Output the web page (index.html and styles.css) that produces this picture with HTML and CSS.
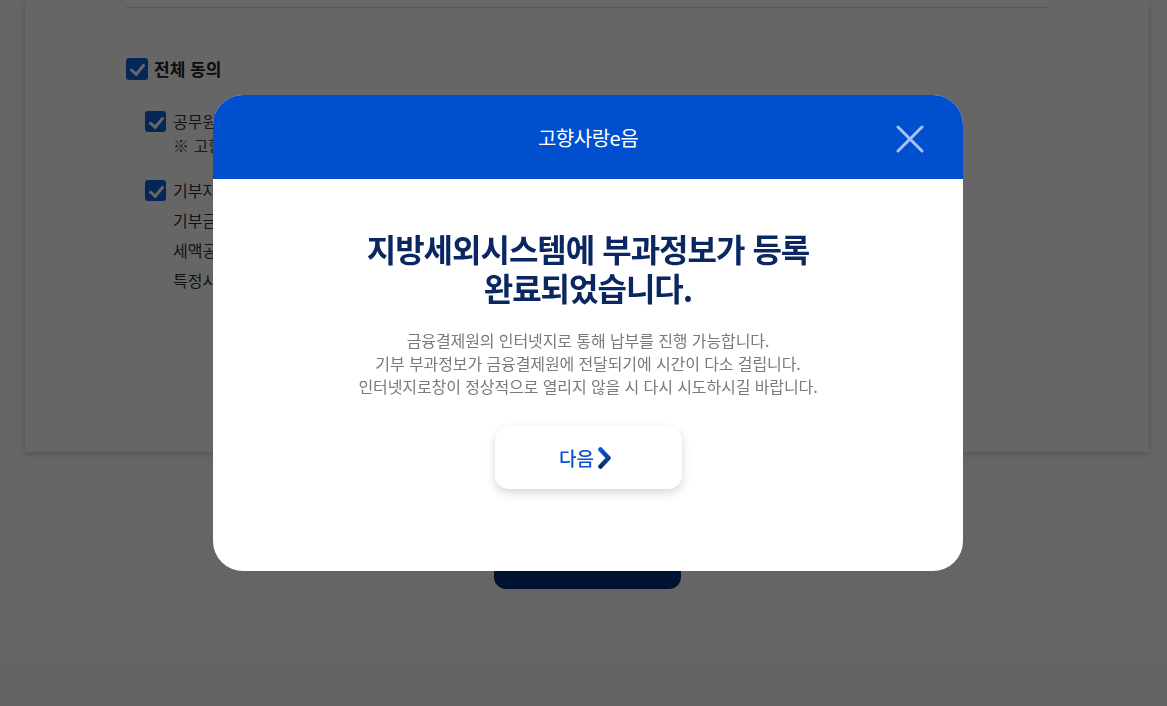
FILE: index.html
```html
<!DOCTYPE html>
<html lang="ko">
<head>
  <meta charset="UTF-8">
  <meta name="viewport" content="width=device-width, initial-scale=1.0">
  <title>고향사랑e음</title>
  <link rel="stylesheet" href="styles.css">
</head>
<body>
  <div class="page">
    <!-- Agreement card -->
    <div class="card">
      <div class="divider"></div>

      <label class="agree-all">
        <span class="check"></span>
        <span>전체 동의</span>
      </label>

      <ul class="terms">
        <li>
          <label class="term-title"><span class="check small"></span>공무원 모금 강요 금지 안내</label>
          <p class="note">※ 고향사랑기부금은 자발적 기부입니다.</p>
        </li>
        <li>
          <label class="term-title"><span class="check small"></span>기부자 유의사항</label>
          <p class="line">기부금 납부 후 취소가 불가합니다.</p>
          <p class="line">세액공제 한도를 확인해 주세요.</p>
          <p class="line">특정시기 기부는 제한될 수 있습니다.</p>
        </li>
      </ul>
    </div>

    <button class="btn-dark">기부하기</button>
  </div>

  <footer class="footer"></footer>

  <!-- Result Modal -->
  <div class="overlay">
    <div class="modal">
      <div class="modal-header">
        <h2 class="modal-title">고향사랑e음</h2>
        <button class="close" aria-label="닫기">
          <svg width="28" height="28" viewBox="0 0 28 28">
            <path d="M2 2 L26 26 M26 2 L2 26" stroke="#a9c3f0" stroke-width="3" stroke-linecap="round"/>
          </svg>
        </button>
      </div>
      <div class="modal-body">
        <h3 class="modal-heading">지방세외시스템에 부과정보가 등록<br>완료되었습니다.</h3>
        <p class="modal-text">
          금융결제원의 인터넷지로 통해 납부를 진행 가능합니다.<br>
          기부 부과정보가 금융결제원에 전달되기에 시간이 다소 걸립니다.<br>
          인터넷지로창이 정상적으로 열리지 않을 시 다시 시도하시길 바랍니다.
        </p>
        <button class="btn-next">
          다음
          <svg width="16" height="22" viewBox="0 0 16 22">
            <defs>
              <linearGradient id="chev" x1="0" y1="0" x2="0" y2="1">
                <stop offset="0" stop-color="#0b52d6"/>
                <stop offset="1" stop-color="#0a2a66"/>
              </linearGradient>
            </defs>
            <path d="M3.5 2.5 L11.5 11 L3.5 19.5" fill="none" stroke="url(#chev)" stroke-width="4.5" stroke-linecap="round" stroke-linejoin="round"/>
          </svg>
        </button>
      </div>
    </div>
  </div>
</body>
</html>
```

FILE: styles.css
```css
/* General */
* {
  box-sizing: border-box;
}

body {
  margin: 0;
  background: #fdfdfd;
  font-family: "Noto Sans CJK KR", "Noto Sans", sans-serif;
  color: #333;
  overflow: hidden;
}

ul, p, h2, h3 {
  margin: 0;
  padding: 0;
}

/* Page underneath */
.page {
  height: 664px;
  display: flex;
  flex-direction: column;
  align-items: center;
  padding-left: 7px;
}

.card {
  width: 1124px;
  height: 452px;
  background: #fff;
  box-shadow: 0 2px 6px rgba(0, 0, 0, 0.18);
  padding: 7px 100px 0 101px;
  align-self: flex-start;
  margin-left: 18px;
}

.divider {
  height: 1px;
  background: #d6d6d6;
}

.agree-all {
  display: flex;
  align-items: center;
  gap: 6px;
  margin-top: 48px;
  font-size: 17px;
  font-weight: 700;
  color: #222;
}

.check {
  width: 22px;
  height: 22px;
  border-radius: 3px;
  background: #0c62d6;
  position: relative;
  flex: none;
}

.check::after {
  content: "";
  position: absolute;
  left: 7px;
  top: 3px;
  width: 6px;
  height: 11px;
  border: solid #fff;
  border-width: 0 3px 3px 0;
  transform: rotate(40deg);
}

.check.small {
  width: 21px;
  height: 21px;
}

.terms {
  list-style: none;
  padding-left: 19px;
  margin-top: 29px;
}

.terms li + li {
  margin-top: 21px;
}

.term-title {
  display: flex;
  align-items: center;
  gap: 7px;
  font-size: 16px;
  color: #333;
  line-height: 22px;
}

.note {
  padding-left: 28px;
  font-size: 16px;
  line-height: 26px;
  color: #444;
}

.line {
  padding-left: 28px;
  font-size: 16px;
  line-height: 30px;
  color: #333;
}

.term-title + .line {
  margin-top: 4px;
}

.btn-dark {
  margin-top: 74px;
  width: 187px;
  height: 63px;
  border: none;
  border-radius: 12px;
  background: #002d7a;
  color: #fff;
  font-family: inherit;
  font-size: 19px;
}

.footer {
  height: 42px;
  background: #f8f8f8;
}

/* Modal */
.overlay {
  position: fixed;
  inset: 0;
  background: rgba(0, 0, 0, 0.6);
  display: flex;
  justify-content: center;
  align-items: flex-start;
  padding: 95px 0 0 9px;
}

.modal {
  width: 750px;
  height: 476px;
  background: #fff;
  border-radius: 30px;
  overflow: hidden;
}

.modal-header {
  height: 84px;
  background: #004fce;
  display: flex;
  align-items: center;
  justify-content: center;
  position: relative;
}

.modal-title {
  color: #fff;
  font-size: 20px;
  font-weight: 400;
  letter-spacing: -0.5px;
  margin-top: 1px;
}

.close {
  position: absolute;
  right: 39px;
  top: 30px;
  padding: 0;
  border: none;
  background: none;
  width: 28px;
  height: 28px;
  filter: blur(0.5px);
}

.modal-body {
  display: flex;
  flex-direction: column;
  align-items: center;
  text-align: center;
  padding-top: 50px;
}

.modal-heading {
  font-size: 32px;
  font-weight: 700;
  line-height: 39px;
  letter-spacing: -1px;
  color: #0b2762;
}

.modal-text {
  margin-top: 22px;
  font-size: 16px;
  line-height: 23px;
  letter-spacing: -0.1px;
  color: #7a7a7a;
}

.btn-next {
  margin-top: 28px;
  width: 187px;
  height: 63px;
  border: none;
  border-radius: 14px;
  background: #fff;
  box-shadow: 0 4px 10px rgba(0, 0, 0, 0.16);
  display: flex;
  align-items: center;
  justify-content: center;
  gap: 3px;
  font-family: inherit;
  font-size: 19px;
  font-weight: 500;
  color: #0b50d0;
  padding: 0 4px 0 0;
}
```
